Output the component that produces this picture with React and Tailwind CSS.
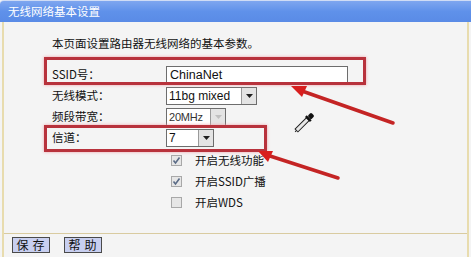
import React from 'react';

const cjk = { fontFamily: '"Noto Sans CJK SC", "Noto Sans", sans-serif' };
const arial = { fontFamily: '"Liberation Sans", Arial, sans-serif' };

function DropButton({ disabled }) {
    return (
        <div className="w-[15px] h-full border-l border-[#9a9a9a] bg-[#e4e4e4] flex items-center justify-center">
            <svg width="9" height="6" viewBox="0 0 9 6">
                <path d="M1 1 L8 1 L4.5 5 Z" fill={disabled ? '#c0c0c0' : '#202020'} />
            </svg>
        </div>
    );
}

function Select({ value, width, disabled }) {
    return (
        <div
            className={`h-[18px] flex items-stretch border border-[#6d6d6d] bg-white ${width}`}
            style={arial}
        >
            <div className={`flex-1 pl-[2px] whitespace-nowrap overflow-hidden leading-[16px] ${disabled ? 'text-[11px] tracking-[-0.2px] text-[#333]' : 'text-[12px] text-[#111]'}`}>{value}</div>
            <DropButton disabled={disabled} />
        </div>
    );
}

function Row({ label, children }) {
    return (
        <div className="h-[21px] flex items-center">
            <div className="w-[114px] text-[11.5px] text-[#111]" style={cjk}>{label}</div>
            {children}
        </div>
    );
}

function Check({ checked, label }) {
    return (
        <div className="h-[21px] flex items-center pl-[119px]">
            <div className="w-[11px] h-[11px] border border-[#a8a8a8] bg-[#e6e6e6] flex items-center justify-center">
                {checked && (
                    <svg width="9" height="9" viewBox="0 0 9 9">
                        <path d="M1.5 4.5 L3.5 7 L7.5 1.5" stroke="#5a6b86" strokeWidth="1.6" fill="none" />
                    </svg>
                )}
            </div>
            <span className="ml-[13px] text-[11.5px] text-[#111]" style={cjk}>{label}</span>
        </div>
    );
}

export default function App() {
    return (
        <div className="relative w-[471px] h-[257px] overflow-hidden bg-[#f4f4f4]">
            {/* Title bar */}
            <div className="h-[22px] bg-gradient-to-b from-[#7ea6ef] via-[#5f91ea] to-[#5a8be6] rounded-tl-[4px] flex items-center pl-[8px] border-t border-[#cfdcf5]">
                <span className="text-white text-[11.5px] leading-none" style={cjk}>无线网络基本设置</span>
            </div>

            {/* Body */}
            <div className="ml-[2px] mr-[2px] border-l-2 border-r-2 border-[#e8dcae] h-[235px] flex flex-col">
                <div className="pt-[11px] pl-[48px] h-[31px] text-[11.5px] leading-[20px] text-[#111]" style={cjk}>
                    本页面设置路由器无线网络的基本参数。
                </div>

                <div className="mt-[11px] pl-[48px] flex flex-col">
                    <Row label="SSID号：">
                        <div className="w-[182px] h-[18px] border border-[#6d6d6d] bg-white pl-[3px] text-[12.5px] leading-[16px] text-[#111]" style={arial}>
                            ChinaNet
                        </div>
                    </Row>
                    <Row label="无线模式：">
                        <Select value="11bg mixed" width="w-[91px]" />
                    </Row>
                    <Row label="频段带宽：">
                        <Select value="20MHz" width="w-[60px]" disabled />
                    </Row>
                    <Row label="信道：">
                        <Select value="7" width="w-[48px]" />
                    </Row>
                </div>

                <div className="mt-[2px] pl-[48px] flex flex-col">
                    <Check checked label="开启无线功能" />
                    <Check checked label="开启SSID广播" />
                    <Check label="开启WDS" />
                </div>

                <div className="mt-[20px] border-t border-[#d9cba0]" />

                <div className="pt-[3px] pl-[8px] flex gap-[14px]">
                    <button className="w-[38px] h-[16px] border border-[#4a4a4a] bg-[#c8cff0] text-[12px] leading-[14px] text-[#111] tracking-[4px] pl-[3px]" style={cjk}>
                        保存
                    </button>
                    <button className="w-[38px] h-[16px] border border-[#4a4a4a] bg-[#c8cff0] text-[12px] leading-[14px] text-[#111] tracking-[4px] pl-[3px]" style={cjk}>
                        帮助
                    </button>
                </div>
            </div>

            {/* Red annotation boxes */}
            <div className="absolute left-[44px] top-[57px] w-[322px] h-[28px] border-[3px] border-[#b8323c] shadow-[0_0_3px_#f0a0a8]" />
            <div className="absolute left-[44px] top-[125px] w-[223px] h-[27px] border-[3px] border-[#b8323c] shadow-[0_0_3px_#f0a0a8]" />

            {/* Arrows and cursor */}
            <svg className="absolute left-0 top-0" width="471" height="257" viewBox="0 0 471 257">
                <line x1="393" y1="123" x2="302" y2="91" stroke="#c42424" strokeWidth="3.5" strokeLinecap="round" />
                <polygon points="291,86 307,86 302,97" fill="#d81e1e" />
                <line x1="338" y1="178" x2="270" y2="156" stroke="#c42424" strokeWidth="3.5" strokeLinecap="round" />
                <polygon points="258,151 273,151 268,162" fill="#d81e1e" />

                {/* eyedropper */}
                <g transform="translate(305 122) rotate(45)">
                    <rect x="-2" y="-4" width="4" height="16" fill="#e8e8e8" stroke="#222" strokeWidth="1" />
                    <rect x="-3.5" y="-6" width="7" height="2.5" fill="#111" />
                    <rect x="-2.5" y="-11" width="5" height="5" rx="1.5" fill="#111" />
                    <line x1="0" y1="12" x2="0" y2="14" stroke="#222" strokeWidth="1" />
                </g>
            </svg>
        </div>
    );
}
